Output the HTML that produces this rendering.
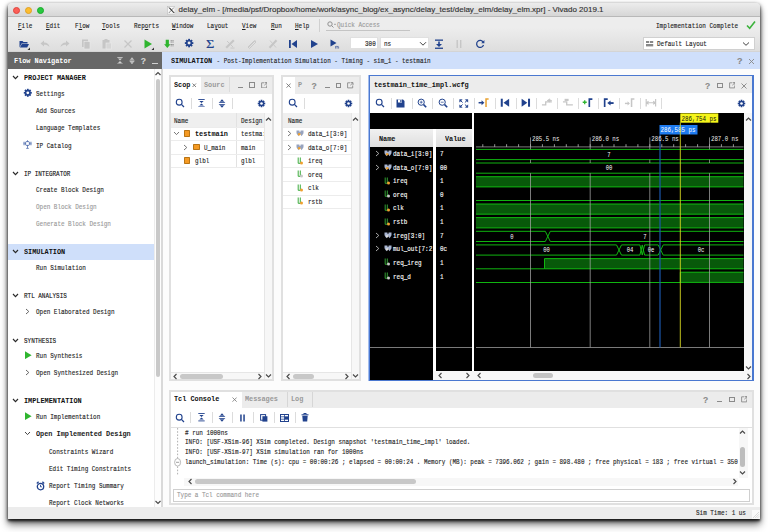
<!DOCTYPE html>
<html><head><meta charset="utf-8"><title>delay_elm - Vivado 2019.1</title><style>
html,body{margin:0;padding:0}
body{width:768px;height:532px;background:#fff;font-family:"Liberation Mono",monospace;font-size:8px;overflow:hidden;position:relative}
.t{-webkit-text-stroke:0.14px currentColor;position:absolute;display:inline-block;transform:scaleX(.743);transform-origin:0 50%;white-space:pre;line-height:10px;height:10px}
.r{position:absolute;box-sizing:border-box}
u{text-decoration:underline;text-underline-offset:1px}
</style></head><body>
<div class="r" style="left:8px;top:3px;width:752px;height:515.7px;background:#ececec;border-radius:4px 4px 0 0;box-shadow:0 2px 2.5px rgba(0,0,0,.7),0 4px 6px rgba(0,0,0,.5),0 7px 8px rgba(0,0,0,.22),0 1px 4px rgba(0,0,0,.35)"></div>
<div class="r" style="left:8px;top:3px;width:752px;height:14px;background:linear-gradient(#ececec,#d6d6d6);border-radius:4px 4px 0 0;border-bottom:1px solid #b8b8b8"></div>
<div class="r" style="left:13.2px;top:6.5px;width:7px;height:7px;background:#fc5f57;border-radius:50%;border:0.5px solid #e0443e"></div>
<div class="r" style="left:25.1px;top:6.5px;width:7px;height:7px;background:#fdbc2e;border-radius:50%;border:0.5px solid #dea123"></div>
<div class="r" style="left:37.0px;top:6.5px;width:7px;height:7px;background:#28c840;border-radius:50%;border:0.5px solid #1aab29"></div>
<span class="t" style="left:178.6px;top:5.40px;font-size:8.0px;color:#333;transform:scaleX(1);font-family:'Liberation Sans',sans-serif;">delay_elm - [/media/psf/Dropbox/home/work/async_blog/ex_async/delay_test/delay_elm/delay_elm.xpr] - Vivado 2019.1</span>
<svg class="r" style="left:166.5px;top:6px;" width="8.5" height="8.5" viewBox="0 0 8.5 8.5"><rect x="0.4" y="0.4" width="7.7" height="7.7" fill="#f8f8f8" stroke="#bbb" stroke-width="0.6"/><path d="M1.8 1.6 L6.8 7 M2.6 1.6 L7.4 7" stroke="#222" stroke-width="0.7"/><path d="M6.8 1.6 L1.8 7" stroke="#222" stroke-width="0.5"/></svg>
<div class="r" style="left:8px;top:17px;width:752px;height:35px;background:linear-gradient(#ededed 30%,#dedede 96%,#cfcfcf);"></div>
<span class="t" style="left:18.3px;top:21.10px;font-size:8px;color:#222;"><u>F</u>ile</span>
<span class="t" style="left:46px;top:21.10px;font-size:8px;color:#222;"><u>E</u>dit</span>
<span class="t" style="left:74.7px;top:21.10px;font-size:8px;color:#222;">F<u>l</u>ow</span>
<span class="t" style="left:102.3px;top:21.10px;font-size:8px;color:#222;"><u>T</u>ools</span>
<span class="t" style="left:134px;top:21.10px;font-size:8px;color:#222;">Rep<u>o</u>rts</span>
<span class="t" style="left:172.3px;top:21.10px;font-size:8px;color:#222;"><u>W</u>indow</span>
<span class="t" style="left:207.3px;top:21.10px;font-size:8px;color:#222;">La<u>y</u>out</span>
<span class="t" style="left:242.3px;top:21.10px;font-size:8px;color:#222;"><u>V</u>iew</span>
<span class="t" style="left:270.5px;top:21.10px;font-size:8px;color:#222;"><u>R</u>un</span>
<span class="t" style="left:295px;top:21.10px;font-size:8px;color:#222;"><u>H</u>elp</span>
<div class="r" style="left:319px;top:19px;width:1px;height:13px;background:#d0d0d0;"></div>
<span class="t" style="left:337.2px;top:19.60px;font-size:8px;color:#999;">Quick Access</span>
<svg class="r" style="left:326.5px;top:21px;" width="10" height="7" viewBox="0 0 10 7"><circle cx="3" cy="3" r="2.2" fill="none" stroke="#888" stroke-width="0.9"/><path d="M4.6 4.6 L6.5 6.5 M7.2 3.3 h1.6" stroke="#888" stroke-width="0.9"/></svg>
<div class="r" style="left:326px;top:30.3px;width:83.5px;height:1px;background:#c4c4c4;"></div>
<span class="t" style="left:656px;top:21.10px;font-size:8px;color:#222;">Implementation Complete</span>
<svg class="r" style="left:746px;top:20px;" width="10" height="10" viewBox="0 0 10 10"><path d="M1 5.5 L3.7 8.3 L9 1.5" fill="none" stroke="#3db33d" stroke-width="1.6"/></svg>
<svg class="r" style="left:18.0px;top:37.5px;" width="12" height="12" viewBox="0 0 12 12"><path d="M1.5 3 h3 l1 1 h4 v1.5 h-6 l-2 4 z" fill="#21428d"/><path d="M3.8 6 h7.2 l-1.8 3.6 h-7.3 z" fill="#21428d"/><path d="M9.5 12 l2.5 -2.5 v2.5 z" fill="#333"/></svg>
<svg class="r" style="left:39.0px;top:37.5px;" width="12" height="12" viewBox="0 0 12 12"><path d="M1.5 5.5 L5 2.5 V4.5 C8 4.5 10 6 10.5 9 C9 7.2 7.5 6.7 5 6.7 V8.5 Z" fill="#c6c6c6"/></svg>
<svg class="r" style="left:59.0px;top:37.5px;" width="12" height="12" viewBox="0 0 12 12"><path d="M10.5 5.5 L7 2.5 V4.5 C4 4.5 2 6 1.5 9 C3 7.2 4.5 6.7 7 6.7 V8.5 Z" fill="#c6c6c6"/></svg>
<svg class="r" style="left:80.0px;top:37.5px;" width="12" height="12" viewBox="0 0 12 12"><rect x="2" y="1.5" width="6" height="7.5" fill="#c6c6c6"/><rect x="4" y="3.5" width="6" height="7.5" fill="#c6c6c6" stroke="#ececec" stroke-width="0.6"/></svg>
<svg class="r" style="left:100.6px;top:37.5px;" width="12" height="12" viewBox="0 0 12 12"><rect x="1.5" y="2" width="7" height="8.5" fill="#c6c6c6"/><rect x="3.5" y="1" width="3" height="2" fill="#c6c6c6"/><rect x="5" y="5" width="5.5" height="6" fill="#d6d6d6" stroke="#ececec" stroke-width="0.6"/></svg>
<svg class="r" style="left:121.6px;top:37.5px;" width="12" height="12" viewBox="0 0 12 12"><path d="M2.5 2.5 L9.5 9.5 M9.5 2.5 L2.5 9.5" stroke="#c6c6c6" stroke-width="1.2"/></svg>
<svg class="r" style="left:142.0px;top:37.5px;" width="12" height="12" viewBox="0 0 12 12"><path d="M2.5 1.5 L10 6 L2.5 10.5 Z" fill="#2fb52f"/><path d="M9.5 12 l2.5 -2.5 v2.5 z" fill="#333"/></svg>
<svg class="r" style="left:162.5px;top:37.5px;" width="12" height="12" viewBox="0 0 12 12"><path d="M2.7 1.7 h3.2 v4.6 h1.6 l-3.2 3.7 l-3.2 -3.7 h1.6 z" fill="#2fb52f"/><path d="M8.2 2.2 v2.6 M10 2.2 v2.6 M8.2 6 v2.6 M10 6 v2.6" stroke="#777" stroke-width="1.1" stroke-dasharray="0.9 0.5"/></svg>
<svg class="r" style="left:184.2px;top:38.4px;" width="10.2" height="10.2" viewBox="0 0 12 12"><g transform="translate(6 6)"><g fill="#21428d"><rect x="-1.1" y="-5" width="2.2" height="10" transform="rotate(0)"/><rect x="-1.1" y="-5" width="2.2" height="10" transform="rotate(45)"/><rect x="-1.1" y="-5" width="2.2" height="10" transform="rotate(90)"/><rect x="-1.1" y="-5" width="2.2" height="10" transform="rotate(135)"/></g><circle r="3.7" fill="#21428d"/><circle r="1.75" fill="#ececec"/></g></svg>
<span class="t" style="left:206px;top:38.70px;font-size:12.5px;color:#21428d;transform:scaleX(1.15);font-family:'Liberation Serif',serif;">Σ</span>
<svg class="r" style="left:224.3px;top:37.5px;" width="12" height="12" viewBox="0 0 12 12"><path d="M2.2 9.8 L9.8 2.2" stroke="#c6c6c6" stroke-width="2.2"/><path d="M3 3 L9 9 M6.5 10 h4" stroke="#c6c6c6" stroke-width="0.9"/></svg>
<svg class="r" style="left:245.7px;top:37.5px;" width="12" height="12" viewBox="0 0 12 12"><path d="M2 9 L8.5 2.5 L10 4 L3.5 10.5 Z M4 7 L7.5 3.5" stroke="#c6c6c6" stroke-width="0.9" fill="none"/><path d="M2 10 L9.5 2.5" stroke="#c6c6c6" stroke-width="0.8"/></svg>
<svg class="r" style="left:266.5px;top:37.5px;" width="12" height="12" viewBox="0 0 12 12"><path d="M2.5 9.8 L9.5 2.2" stroke="#c6c6c6" stroke-width="2"/><path d="M3 2.5 L9 9.5" stroke="#c6c6c6" stroke-width="0.9"/></svg>
<svg class="r" style="left:287.3px;top:37.5px;" width="12" height="12" viewBox="0 0 12 12"><rect x="2" y="2" width="1.8" height="8" fill="#21428d"/><path d="M10 2 L4.5 6 L10 10 Z" fill="#21428d"/></svg>
<svg class="r" style="left:307.7px;top:37.5px;" width="12" height="12" viewBox="0 0 12 12"><path d="M3 2 L10 6 L3 10 Z" fill="#21428d"/></svg>
<svg class="r" style="left:329.0px;top:37.5px;" width="12" height="12" viewBox="0 0 12 12"><path d="M1.5 1.5 L7.5 5 L1.5 8.5 Z" fill="#21428d"/><path d="M6.6 10.6 v-2.4 M6.6 8.6 q1.2 -0.9 1.5 0.3 v1.7 M8.1 8.6 q1.2 -0.9 1.5 0.3 v1.7" stroke="#21428d" stroke-width="0.6" fill="none"/></svg>
<div class="r" style="left:349.5px;top:37px;width:28.5px;height:12px;background:#fff;border:1px solid #e0e0e0"></div>
<span class="t" style="left:365px;top:38.60px;font-size:8px;color:#222;">300</span>
<div class="r" style="left:380px;top:37px;width:49.2px;height:12px;background:#fff;border:1px solid #e0e0e0"></div>
<span class="t" style="left:384px;top:38.60px;font-size:8px;color:#222;">ns</span>
<svg class="r" style="left:418.5px;top:40.6px;" width="8" height="6" viewBox="0 0 8 6"><path d="M1 1.2 L4 4.2 L7 1.2" fill="none" stroke="#444" stroke-width="1"/></svg>
<svg class="r" style="left:432.5px;top:37.5px;" width="12" height="12" viewBox="0 0 12 12"><rect x="2" y="1.5" width="8" height="1.3" fill="#21428d"/><path d="M6 3.5 v4" stroke="#21428d" stroke-width="1.6"/><path d="M3 6 h6 l-3 3 z" fill="#21428d"/><rect x="2" y="9.6" width="8" height="1.3" fill="#21428d"/></svg>
<svg class="r" style="left:453.3px;top:37.5px;" width="12" height="12" viewBox="0 0 12 12"><rect x="3.5" y="2" width="1.4" height="8" fill="#c6c6c6"/><rect x="7" y="2" width="1.4" height="8" fill="#c6c6c6"/></svg>
<svg class="r" style="left:473.8px;top:37.5px;" width="12" height="12" viewBox="0 0 12 12"><path d="M9.2 4.2 A3.5 3.5 0 1 0 9.5 7" fill="none" stroke="#21428d" stroke-width="1.25"/><path d="M10.4 2 v3.2 h-3.2 z" fill="#21428d"/></svg>
<div class="r" style="left:642.5px;top:37px;width:112.5px;height:13px;background:#fff;border:1px solid #d0d0d0"></div>
<svg class="r" style="left:646px;top:40.5px;" width="8" height="7" viewBox="0 0 8 7"><rect x="0" y="0" width="3.2" height="2" fill="#888"/><rect x="4" y="0" width="3.2" height="2" fill="#888"/><rect x="0" y="3" width="7.2" height="2.4" fill="#888"/></svg>
<span class="t" style="left:657px;top:39.10px;font-size:8px;color:#222;">Default Layout</span>
<svg class="r" style="left:742px;top:41px;" width="8" height="6" viewBox="0 0 8 6"><path d="M1 1.5 L4 4.3 L7 1.5" fill="none" stroke="#444" stroke-width="1"/></svg>
<div class="r" style="left:8px;top:52px;width:154px;height:16.6px;background:#676767;"></div>
<span class="t" style="left:14px;top:55.90px;font-size:8px;color:#fff;font-weight:bold;-webkit-text-stroke:0;transform:scaleX(0.858);">Flow Navigator</span>
<svg class="r" style="left:116.5px;top:57px;" width="6" height="7.4" viewBox="0 0 6 7.4"><path d="M0.3 0.5 h5.4 M0.3 6.9 h5.4" stroke="#d0d0d0" stroke-width="0.8"/><path d="M3 3.5 L5 1.5 H1 Z M3 3.9 L5 5.9 H1 Z" fill="#d0d0d0"/></svg>
<svg class="r" style="left:128.6px;top:57px;" width="6" height="7.4" viewBox="0 0 6 7.4"><path d="M3 0.2 L5.7 3.4 H0.3 Z M3 7.2 L5.7 4 H0.3 Z" fill="#d0d0d0"/><path d="M0 2.3 h6 M0 5.1 h6" stroke="#676767" stroke-width="0.4"/></svg>
<span class="t" style="left:140.8px;top:55.90px;font-size:8.5px;color:#d4d4d4;transform:scaleX(1);font-family:'Liberation Sans',sans-serif;font-weight:bold;">?</span>
<div class="r" style="left:152px;top:62.6px;width:6.3px;height:1.2px;background:#d0d0d0;"></div>
<div class="r" style="left:8px;top:68.7px;width:146px;height:438.5px;background:#fff;"></div>
<div class="r" style="left:153.5px;top:68.7px;width:7.5px;height:438.5px;background:#fdfdfd;border-left:1px solid #ececec"></div>
<div class="r" style="left:155.5px;top:79px;width:4.5px;height:297.5px;background:#c9c9c9;border-radius:2.5px"></div>
<svg class="r" style="left:154px;top:70px;" width="8" height="7" viewBox="0 0 8 7"><path d="M1.5 5 L4 2.5 L6.5 5" fill="none" stroke="#4a4a4a" stroke-width="1.15"/></svg>
<svg class="r" style="left:154px;top:499px;" width="8" height="7" viewBox="0 0 8 7"><path d="M1.5 2 L4 4.5 L6.5 2" fill="none" stroke="#4a4a4a" stroke-width="1.15"/></svg>
<div class="r" style="left:8px;top:244px;width:146px;height:15.7px;background:#cfdffa;"></div>
<svg class="r" style="left:11.8px;top:75.1px;" width="7" height="5" viewBox="0 0 7 5"><path d="M1 1 L3.5 3.6 L6 1" fill="none" stroke="#2a2a2a" stroke-width="1.15"/></svg>
<span class="t" style="left:24px;top:73.20px;font-size:8px;color:#111;font-weight:bold;-webkit-text-stroke:0;transform:scaleX(0.858);">PROJECT MANAGER</span>
<span class="t" style="left:36.2px;top:89.00px;font-size:8px;color:#222;">Settings</span>
<svg class="r" style="left:23.2px;top:88.4px;" width="9.6" height="9.6" viewBox="0 0 12 12"><g transform="translate(6 6)"><g fill="#21428d"><rect x="-1.1" y="-5" width="2.2" height="10" transform="rotate(0)"/><rect x="-1.1" y="-5" width="2.2" height="10" transform="rotate(45)"/><rect x="-1.1" y="-5" width="2.2" height="10" transform="rotate(90)"/><rect x="-1.1" y="-5" width="2.2" height="10" transform="rotate(135)"/></g><circle r="3.7" fill="#21428d"/><circle r="1.75" fill="#fff"/></g></svg>
<span class="t" style="left:36.2px;top:105.90px;font-size:8px;color:#222;">Add Sources</span>
<span class="t" style="left:36.2px;top:123.10px;font-size:8px;color:#222;">Language Templates</span>
<span class="t" style="left:36.2px;top:140.60px;font-size:8px;color:#222;">IP Catalog</span>
<svg class="r" style="left:23.2px;top:139.8px;" width="9" height="10" viewBox="0 0 9 10"><rect x="2.6" y="1.6" width="3.8" height="3.8" rx="1" fill="none" stroke="#3e5fa6" stroke-width="0.9"/><path d="M0.3 2.3 h1.6 M0.3 3.5 h1.6 M0.3 4.7 h1.6 M7.1 2.3 h1.6 M7.1 3.5 h1.6 M7.1 4.7 h1.6 M4.5 0.2 v1 M4.5 5.6 v2.6 M3.2 8.4 h2.6" stroke="#3e5fa6" stroke-width="0.7" fill="none"/></svg>
<svg class="r" style="left:11.8px;top:170.9px;" width="7" height="5" viewBox="0 0 7 5"><path d="M1 1 L3.5 3.6 L6 1" fill="none" stroke="#2a2a2a" stroke-width="1.15"/></svg>
<span class="t" style="left:24px;top:169.00px;font-size:8px;color:#111;">IP INTEGRATOR</span>
<span class="t" style="left:36.2px;top:184.60px;font-size:8px;color:#222;">Create Block Design</span>
<span class="t" style="left:36.2px;top:201.90px;font-size:8px;color:#999;">Open Block Design</span>
<span class="t" style="left:36.2px;top:219.00px;font-size:8px;color:#999;">Generate Block Design</span>
<svg class="r" style="left:11.8px;top:249.3px;" width="7" height="5" viewBox="0 0 7 5"><path d="M1 1 L3.5 3.6 L6 1" fill="none" stroke="#2a2a2a" stroke-width="1.15"/></svg>
<span class="t" style="left:24px;top:247.40px;font-size:8px;color:#111;font-weight:bold;-webkit-text-stroke:0;transform:scaleX(0.858);">SIMULATION</span>
<span class="t" style="left:36.2px;top:263.00px;font-size:8px;color:#222;">Run Simulation</span>
<svg class="r" style="left:11.8px;top:293.3px;" width="7" height="5" viewBox="0 0 7 5"><path d="M1 1 L3.5 3.6 L6 1" fill="none" stroke="#2a2a2a" stroke-width="1.15"/></svg>
<span class="t" style="left:24px;top:291.40px;font-size:8px;color:#111;">RTL ANALYSIS</span>
<span class="t" style="left:36.2px;top:306.90px;font-size:8px;color:#222;">Open Elaborated Design</span>
<svg class="r" style="left:25.0px;top:307.8px;" width="5" height="7" viewBox="0 0 5 7"><path d="M1 1 L3.8 3.5 L1 6" fill="none" stroke="#555" stroke-width="0.9"/></svg>
<svg class="r" style="left:11.8px;top:337.5px;" width="7" height="5" viewBox="0 0 7 5"><path d="M1 1 L3.5 3.6 L6 1" fill="none" stroke="#2a2a2a" stroke-width="1.15"/></svg>
<span class="t" style="left:24px;top:335.60px;font-size:8px;color:#111;">SYNTHESIS</span>
<span class="t" style="left:36.2px;top:350.90px;font-size:8px;color:#222;">Run Synthesis</span>
<svg class="r" style="left:23.5px;top:351.1px;" width="8" height="8.4" viewBox="0 0 8 8.4"><path d="M1 0.3 L7.6 4.2 L1 8.1 Z" fill="#2fb52f"/></svg>
<span class="t" style="left:36.2px;top:368.20px;font-size:8px;color:#222;">Open Synthesized Design</span>
<svg class="r" style="left:25.0px;top:369.1px;" width="5" height="7" viewBox="0 0 5 7"><path d="M1 1 L3.8 3.5 L1 6" fill="none" stroke="#555" stroke-width="0.9"/></svg>
<svg class="r" style="left:11.8px;top:398.3px;" width="7" height="5" viewBox="0 0 7 5"><path d="M1 1 L3.5 3.6 L6 1" fill="none" stroke="#2a2a2a" stroke-width="1.15"/></svg>
<span class="t" style="left:24px;top:396.40px;font-size:8px;color:#111;font-weight:bold;-webkit-text-stroke:0;transform:scaleX(0.858);">IMPLEMENTATION</span>
<span class="t" style="left:36.2px;top:412.20px;font-size:8px;color:#222;">Run Implementation</span>
<svg class="r" style="left:23.5px;top:412.40000000000003px;" width="8" height="8.4" viewBox="0 0 8 8.4"><path d="M1 0.3 L7.6 4.2 L1 8.1 Z" fill="#2fb52f"/></svg>
<span class="t" style="left:36.2px;top:429.10px;font-size:8px;color:#222;font-weight:bold;-webkit-text-stroke:0;transform:scaleX(0.858);">Open Implemented Design</span>
<svg class="r" style="left:24.0px;top:431.0px;" width="7" height="5" viewBox="0 0 7 5"><path d="M1 1 L3.5 3.6 L6 1" fill="none" stroke="#444" stroke-width="1"/></svg>
<span class="t" style="left:48.5px;top:446.60px;font-size:8px;color:#222;">Constraints Wizard</span>
<span class="t" style="left:48.5px;top:463.80px;font-size:8px;color:#222;">Edit Timing Constraints</span>
<span class="t" style="left:48.5px;top:481.10px;font-size:8px;color:#222;">Report Timing Summary</span>
<svg class="r" style="left:36px;top:480.5px;" width="9" height="10" viewBox="0 0 9 10"><circle cx="4.5" cy="5.6" r="3.2" fill="none" stroke="#21428d" stroke-width="1.3"/><path d="M4.5 3.8 v2 h1.4" stroke="#21428d" stroke-width="0.9" fill="none"/><path d="M0.8 2.4 l1.8 -1.6 M8.2 2.4 l-1.8 -1.6" stroke="#21428d" stroke-width="1.3" fill="none"/></svg>
<span class="t" style="left:48.5px;top:498.30px;font-size:8px;color:#222;">Report Clock Networks</span>
<div class="r" style="left:162px;top:52px;width:598px;height:16.7px;background:#cfdffb;"></div>
<span class="t" style="left:170.5px;top:55.90px;font-size:8px;color:#111;font-weight:bold;-webkit-text-stroke:0;transform:scaleX(0.858);">SIMULATION</span>
<span class="t" style="left:213.4px;top:55.90px;font-size:8px;color:#222;"> - Post-Implementation Simulation - Timing - sim_1 - testmain</span>
<span class="t" style="left:737px;top:56.10px;font-size:9px;color:#888;transform:scaleX(1);font-family:'Liberation Sans',sans-serif;font-weight:bold;">?</span>
<svg class="r" style="left:748px;top:57.5px;" width="7" height="7" viewBox="0 0 7 7"><path d="M1 1 L6 6 M6 1 L1 6" stroke="#888" stroke-width="0.9"/></svg>
<div class="r" style="left:162px;top:68.7px;width:598px;height:438.5px;background:#fcfcfc;"></div>
<div class="r" style="left:161px;top:68.7px;width:2px;height:438.5px;background:#d9d9d9;"></div>
<div class="r" style="left:168.5px;top:75px;width:105px;height:306px;background:#fff;border:2px solid #e0e0e0"></div>
<div class="r" style="left:170.5px;top:77px;width:101px;height:16.5px;background:#ececec;"></div>
<div class="r" style="left:170.5px;top:77px;width:30.5px;height:16.5px;background:#fff;"></div>
<span class="t" style="left:174px;top:79.70px;font-size:8px;color:#111;font-weight:bold;-webkit-text-stroke:0;transform:scaleX(0.858);">Scop</span>
<svg class="r" style="left:192.25px;top:83.05px;" width="4.5" height="4.5" viewBox="0 0 4.5 4.5"><path d="M0.5 0.5 L4.0 4.0 M4.0 0.5 L0.5 4.0" stroke="#666" stroke-width="0.8"/></svg>
<span class="t" style="left:204px;top:79.70px;font-size:8px;color:#999;font-weight:bold;-webkit-text-stroke:0;transform:scaleX(0.858);">Sourc</span>
<div class="r" style="left:228.5px;top:77px;width:1px;height:15px;background:#dcdcdc;"></div>
<div class="r" style="left:237.5px;top:86.5px;width:5px;height:1px;background:#8a8a8a;"></div>
<div class="r" style="left:249.0px;top:82.2px;width:5.5px;height:5.5px;background:transparent;border:1px solid #8a8a8a"></div>
<svg class="r" style="left:260.5px;top:81.7px;" width="6.5" height="6.5" viewBox="0 0 6.5 6.5"><path d="M3 0.8 H0.6 V5.9 H5.7 V3.5" fill="none" stroke="#8a8a8a" stroke-width="0.9"/><path d="M3.6 0.6 H6 V3 M6 0.6 L3.4 3.2" fill="none" stroke="#8a8a8a" stroke-width="0.9"/></svg>
<svg class="r" style="left:175px;top:98px;" width="10" height="10" viewBox="0 0 10 10"><circle cx="4.2" cy="4.2" r="2.9" fill="none" stroke="#21428d" stroke-width="1.1"/><path d="M6.4 6.4 L9 9" stroke="#21428d" stroke-width="1.3"/></svg>
<div class="r" style="left:190.5px;top:97.5px;width:1px;height:11px;background:#dcdcdc;"></div>
<svg class="r" style="left:197.5px;top:98.8px;" width="7" height="8.4" viewBox="0 0 7 8.4"><path d="M0.3 0.5 h6.4 M0.3 7.9 h6.4" stroke="#21428d" stroke-width="0.9"/><path d="M3.5 4 L5.7 1.9 H1.3 Z M3.5 4.4 L5.7 6.5 H1.3 Z" fill="#21428d"/></svg>
<div class="r" style="left:211.5px;top:97.5px;width:1px;height:11px;background:#dcdcdc;"></div>
<svg class="r" style="left:217.5px;top:98.5px;" width="8" height="9" viewBox="0 0 8 9"><path d="M4 0.3 L7.4 4.1 H0.6 Z M4 8.7 L7.4 4.9 H0.6 Z" fill="#21428d"/><path d="M0 2.9 h8 M0 6.1 h8" stroke="#fff" stroke-width="0.5"/></svg>
<div class="r" style="left:232px;top:97.5px;width:1px;height:11px;background:#dcdcdc;"></div>
<svg class="r" style="left:257.0px;top:98.5px;" width="9" height="9" viewBox="0 0 12 12"><g transform="translate(6 6)"><g fill="#21428d"><rect x="-1.1" y="-5" width="2.2" height="10" transform="rotate(0)"/><rect x="-1.1" y="-5" width="2.2" height="10" transform="rotate(45)"/><rect x="-1.1" y="-5" width="2.2" height="10" transform="rotate(90)"/><rect x="-1.1" y="-5" width="2.2" height="10" transform="rotate(135)"/></g><circle r="3.7" fill="#21428d"/><circle r="1.75" fill="#fff"/></g></svg>
<div class="r" style="left:170.5px;top:113px;width:93px;height:13.5px;background:#efefef;"></div>
<div class="r" style="left:235.5px;top:113px;width:1px;height:54.5px;background:#e2e2e2;"></div>
<span class="t" style="left:174px;top:115.60px;font-size:8px;color:#222;">Name</span>
<span class="t" style="left:240.5px;top:115.60px;font-size:8px;color:#222;">Design</span>
<div class="r" style="left:170.5px;top:126.5px;width:93px;height:1px;background:#ececec;"></div>
<div class="r" style="left:170.5px;top:140.2px;width:93px;height:1px;background:#ececec;"></div>
<div class="r" style="left:170.5px;top:153.8px;width:93px;height:1px;background:#ececec;"></div>
<div class="r" style="left:170.5px;top:167.4px;width:93px;height:1px;background:#ececec;"></div>
<svg class="r" style="left:172.5px;top:131.1px;" width="7" height="5" viewBox="0 0 7 5"><path d="M1 1 L3.5 3.6 L6 1" fill="none" stroke="#666" stroke-width="0.9"/></svg>
<div class="r" style="left:183.8px;top:130.0px;width:6.6px;height:6.9px;background:#f59a23;border:0.8px solid #b87414;border-radius:0.8px"></div>
<span class="t" style="left:194.5px;top:129.00px;font-size:8px;color:#111;font-weight:bold;-webkit-text-stroke:0;transform:scaleX(0.858);">testmain</span>
<span class="t" style="left:240.5px;top:129.00px;font-size:8px;color:#222;">testma:</span>
<svg class="r" style="left:183.0px;top:143.5px;" width="5" height="7" viewBox="0 0 5 7"><path d="M1 1 L3.8 3.5 L1 6" fill="none" stroke="#666" stroke-width="0.9"/></svg>
<div class="r" style="left:193.3px;top:143.6px;width:6.6px;height:6.9px;background:#f59a23;border:0.8px solid #b87414;border-radius:0.8px"></div>
<span class="t" style="left:204px;top:142.60px;font-size:8px;color:#222;">U_main</span>
<span class="t" style="left:240.5px;top:142.60px;font-size:8px;color:#222;">main</span>
<div class="r" style="left:183.8px;top:157.1px;width:6.6px;height:6.9px;background:#f59a23;border:0.8px solid #b87414;border-radius:0.8px"></div>
<span class="t" style="left:194.5px;top:156.10px;font-size:8px;color:#222;">glbl</span>
<span class="t" style="left:240.5px;top:156.10px;font-size:8px;color:#222;">glbl</span>
<div class="r" style="left:263.5px;top:113px;width:8px;height:266px;background:#f7f7f7;border-left:1px solid #e6e6e6"></div>
<svg class="r" style="left:264.5px;top:116px;" width="7" height="6" viewBox="0 0 7 6"><path d="M1 4.5 L3.5 2 L6 4.5" fill="none" stroke="#4a4a4a" stroke-width="1.15"/></svg>
<svg class="r" style="left:264.5px;top:373px;" width="7" height="6" viewBox="0 0 7 6"><path d="M1 1.5 L3.5 4 L6 1.5" fill="none" stroke="#4a4a4a" stroke-width="1.15"/></svg>
<div class="r" style="left:170.5px;top:372px;width:93px;height:7px;background:#f7f7f7;border-top:1px solid #e6e6e6"></div>
<svg class="r" style="left:171.5px;top:372.5px;" width="6" height="7" viewBox="0 0 6 7"><path d="M4.5 1 L2 3.5 L4.5 6" fill="none" stroke="#4a4a4a" stroke-width="1.15"/></svg>
<svg class="r" style="left:256.5px;top:372.5px;" width="6" height="7" viewBox="0 0 6 7"><path d="M1.5 1 L4 3.5 L1.5 6" fill="none" stroke="#4a4a4a" stroke-width="1.15"/></svg>
<div class="r" style="left:180px;top:374px;width:42.5px;height:4.5px;background:#c8c8c8;border-radius:2.5px"></div>
<div class="r" style="left:281px;top:75px;width:80px;height:306px;background:#fff;border:2px solid #e0e0e0"></div>
<div class="r" style="left:283px;top:77px;width:76px;height:16.5px;background:#ececec;"></div>
<div class="r" style="left:283px;top:77px;width:12px;height:16.5px;background:#fff;"></div>
<svg class="r" style="left:285.9px;top:82.9px;" width="5.2" height="5.2" viewBox="0 0 5.2 5.2"><path d="M0.5 0.5 L4.7 4.7 M4.7 0.5 L0.5 4.7" stroke="#666" stroke-width="0.8"/></svg>
<span class="t" style="left:298px;top:79.60px;font-size:8px;color:#999;font-weight:bold;-webkit-text-stroke:0;transform:scaleX(0.858);">P</span>
<span class="t" style="left:311.5px;top:80.60px;font-size:8.5px;color:#8a8a8a;transform:scaleX(1);font-family:'Liberation Sans',sans-serif;font-weight:bold;">?</span>
<div class="r" style="left:324.5px;top:87px;width:5px;height:1px;background:#8a8a8a;"></div>
<div class="r" style="left:335.5px;top:82.5px;width:5.5px;height:5.5px;background:transparent;border:1px solid #8a8a8a"></div>
<svg class="r" style="left:347px;top:82px;" width="6.5" height="6.5" viewBox="0 0 6.5 6.5"><path d="M3 0.8 H0.6 V5.9 H5.7 V3.5" fill="none" stroke="#8a8a8a" stroke-width="0.9"/><path d="M3.6 0.6 H6 V3 M6 0.6 L3.4 3.2" fill="none" stroke="#8a8a8a" stroke-width="0.9"/></svg>
<svg class="r" style="left:288px;top:98px;" width="10" height="10" viewBox="0 0 10 10"><circle cx="4.2" cy="4.2" r="2.9" fill="none" stroke="#21428d" stroke-width="1.1"/><path d="M6.4 6.4 L9 9" stroke="#21428d" stroke-width="1.3"/></svg>
<div class="r" style="left:303.5px;top:97.5px;width:1px;height:11px;background:#dcdcdc;"></div>
<svg class="r" style="left:344.0px;top:98.5px;" width="9" height="9" viewBox="0 0 12 12"><g transform="translate(6 6)"><g fill="#21428d"><rect x="-1.1" y="-5" width="2.2" height="10" transform="rotate(0)"/><rect x="-1.1" y="-5" width="2.2" height="10" transform="rotate(45)"/><rect x="-1.1" y="-5" width="2.2" height="10" transform="rotate(90)"/><rect x="-1.1" y="-5" width="2.2" height="10" transform="rotate(135)"/></g><circle r="3.7" fill="#21428d"/><circle r="1.75" fill="#fff"/></g></svg>
<div class="r" style="left:283px;top:113px;width:67.5px;height:13.5px;background:#efefef;"></div>
<span class="t" style="left:287.5px;top:115.60px;font-size:8px;color:#222;">Name</span>
<div class="r" style="left:283px;top:126.5px;width:67.5px;height:1px;background:#ececec;"></div>
<div class="r" style="left:283px;top:140.2px;width:67.5px;height:1px;background:#ececec;"></div>
<div class="r" style="left:283px;top:153.8px;width:67.5px;height:1px;background:#ececec;"></div>
<div class="r" style="left:283px;top:167.4px;width:67.5px;height:1px;background:#ececec;"></div>
<div class="r" style="left:283px;top:181px;width:67.5px;height:1px;background:#ececec;"></div>
<div class="r" style="left:283px;top:194.6px;width:67.5px;height:1px;background:#ececec;"></div>
<div class="r" style="left:283px;top:208.2px;width:67.5px;height:1px;background:#ececec;"></div>
<svg class="r" style="left:286.5px;top:129.9px;" width="5" height="7" viewBox="0 0 5 7"><path d="M1 1 L3.8 3.5 L1 6" fill="none" stroke="#666" stroke-width="0.9"/></svg>
<svg class="r" style="left:296px;top:129.9px;" width="8" height="7" viewBox="0 0 8 7"><path d="M0.5 0.6 H3.4 V1.8 H4.6 V0.6 H7.5 V3.2 L5.6 6.3 L4 3.6 L2.4 6.3 L0.5 3.2 Z" fill="#97a3be"/><circle cx="3.2" cy="4.2" r="1.25" fill="#eea030"/></svg>
<span class="t" style="left:307.5px;top:129.00px;font-size:8px;color:#222;">data_i[3:0]</span>
<svg class="r" style="left:286.5px;top:143.5px;" width="5" height="7" viewBox="0 0 5 7"><path d="M1 1 L3.8 3.5 L1 6" fill="none" stroke="#666" stroke-width="0.9"/></svg>
<svg class="r" style="left:296px;top:143.5px;" width="8" height="7" viewBox="0 0 8 7"><path d="M0.5 0.6 H3.4 V1.8 H4.6 V0.6 H7.5 V3.2 L5.6 6.3 L4 3.6 L2.4 6.3 L0.5 3.2 Z" fill="#97a3be"/><circle cx="3.2" cy="4.2" r="1.25" fill="#eea030"/></svg>
<span class="t" style="left:307.5px;top:142.60px;font-size:8px;color:#222;">data_o[7:0]</span>
<svg class="r" style="left:297.0px;top:156.6px;" width="7" height="8" viewBox="0 0 7 8"><path d="M1.2 0.5 V6.3 H3.3 V0.5" fill="none" stroke="#35a835" stroke-width="0.95"/><circle cx="4.5" cy="6" r="1.5" fill="#f0a030"/></svg>
<span class="t" style="left:307.5px;top:156.20px;font-size:8px;color:#222;">ireq</span>
<svg class="r" style="left:297.0px;top:170.2px;" width="7" height="8" viewBox="0 0 7 8"><path d="M1.2 0.5 V6.3 H3.3 V0.5" fill="none" stroke="#35a835" stroke-width="0.95"/><circle cx="4.5" cy="6" r="1.5" fill="#c8c8c8"/></svg>
<span class="t" style="left:307.5px;top:169.80px;font-size:8px;color:#222;">oreq</span>
<svg class="r" style="left:297.0px;top:183.8px;" width="7" height="8" viewBox="0 0 7 8"><path d="M1.2 0.5 V6.3 H3.3 V0.5" fill="none" stroke="#35a835" stroke-width="0.95"/><circle cx="4.5" cy="6" r="1.5" fill="#f0a030"/></svg>
<span class="t" style="left:307.5px;top:183.40px;font-size:8px;color:#222;">clk</span>
<svg class="r" style="left:297.0px;top:197.4px;" width="7" height="8" viewBox="0 0 7 8"><path d="M1.2 0.5 V6.3 H3.3 V0.5" fill="none" stroke="#35a835" stroke-width="0.95"/><circle cx="4.5" cy="6" r="1.5" fill="#f0a030"/></svg>
<span class="t" style="left:307.5px;top:197.00px;font-size:8px;color:#222;">rstb</span>
<div class="r" style="left:350.5px;top:113px;width:8.5px;height:266px;background:#f7f7f7;border-left:1px solid #e6e6e6"></div>
<svg class="r" style="left:351.5px;top:116px;" width="7" height="6" viewBox="0 0 7 6"><path d="M1 4.5 L3.5 2 L6 4.5" fill="none" stroke="#4a4a4a" stroke-width="1.15"/></svg>
<svg class="r" style="left:351.5px;top:373px;" width="7" height="6" viewBox="0 0 7 6"><path d="M1 1.5 L3.5 4 L6 1.5" fill="none" stroke="#4a4a4a" stroke-width="1.15"/></svg>
<div class="r" style="left:283px;top:372px;width:67.5px;height:7px;background:#f7f7f7;border-top:1px solid #e6e6e6"></div>
<svg class="r" style="left:284.5px;top:372.5px;" width="6" height="7" viewBox="0 0 6 7"><path d="M4.5 1 L2 3.5 L4.5 6" fill="none" stroke="#4a4a4a" stroke-width="1.15"/></svg>
<svg class="r" style="left:343.5px;top:372.5px;" width="6" height="7" viewBox="0 0 6 7"><path d="M1.5 1 L4 3.5 L1.5 6" fill="none" stroke="#4a4a4a" stroke-width="1.15"/></svg>
<div class="r" style="left:293px;top:374px;width:20.5px;height:4.5px;background:#c8c8c8;border-radius:2.5px"></div>
<div class="r" style="left:368px;top:75px;width:1px;height:306px;background:#a3bdee;"></div>
<div class="r" style="left:369px;top:75px;width:385px;height:306px;background:#fff;border:1px solid #4a78d0;border-right-width:2px"></div>
<div class="r" style="left:370px;top:76px;width:382px;height:17px;background:#ececec;"></div>
<span class="t" style="left:374px;top:80.20px;font-size:8px;color:#111;font-weight:bold;-webkit-text-stroke:0;transform:scaleX(0.858);">testmain_time_impl.wcfg</span>
<span class="t" style="left:705.0px;top:80.60px;font-size:8.5px;color:#8a8a8a;transform:scaleX(1);font-family:'Liberation Sans',sans-serif;font-weight:bold;">?</span>
<div class="r" style="left:717.0px;top:82.5px;width:5.5px;height:5.5px;background:transparent;border:1px solid #8a8a8a"></div>
<svg class="r" style="left:728.5px;top:82px;" width="6.5" height="6.5" viewBox="0 0 6.5 6.5"><path d="M3 0.8 H0.6 V5.9 H5.7 V3.5" fill="none" stroke="#8a8a8a" stroke-width="0.9"/><path d="M3.6 0.6 H6 V3 M6 0.6 L3.4 3.2" fill="none" stroke="#8a8a8a" stroke-width="0.9"/></svg>
<svg class="r" style="left:740.5px;top:82.5px;" width="6" height="6" viewBox="0 0 6 6"><path d="M0.5 0.5 L5.5 5.5 M5.5 0.5 L0.5 5.5" stroke="#777" stroke-width="0.8"/></svg>
<svg class="r" style="left:375px;top:98px;" width="10" height="10" viewBox="0 0 10 10"><circle cx="4.2" cy="4.2" r="2.9" fill="none" stroke="#21428d" stroke-width="1.1"/><path d="M6.4 6.4 L9 9" stroke="#21428d" stroke-width="1.3"/></svg>
<div class="r" style="left:390.5px;top:97.5px;width:1px;height:11px;background:#dcdcdc;"></div>
<svg class="r" style="left:396px;top:98.5px;" width="9" height="9" viewBox="0 0 9 9"><path d="M0.5 0.5 h6.5 l1.5 1.5 v6.5 h-8 z" fill="#21428d"/><rect x="2" y="0.5" width="4" height="3" fill="#fff"/><rect x="4.3" y="1" width="1.2" height="2" fill="#21428d"/></svg>
<div class="r" style="left:411.5px;top:97.5px;width:1px;height:11px;background:#dcdcdc;"></div>
<svg class="r" style="left:417px;top:98px;" width="10" height="10" viewBox="0 0 10 10"><circle cx="4.2" cy="4.2" r="3.1" fill="none" stroke="#21428d" stroke-width="1"/><path d="M6.6 6.6 L9.2 9.2" stroke="#21428d" stroke-width="1.6"/><path d="M2.7 4.2 h3" stroke="#21428d" stroke-width="0.7"/><path d="M4.2 2.7 v3" stroke="#21428d" stroke-width="0.7"/></svg>
<div class="r" style="left:432px;top:97.5px;width:1px;height:11px;background:#dcdcdc;"></div>
<svg class="r" style="left:437.5px;top:98px;" width="10" height="10" viewBox="0 0 10 10"><circle cx="4.2" cy="4.2" r="3.1" fill="none" stroke="#21428d" stroke-width="1"/><path d="M6.6 6.6 L9.2 9.2" stroke="#21428d" stroke-width="1.6"/><path d="M2.7 4.2 h3" stroke="#21428d" stroke-width="0.7"/></svg>
<div class="r" style="left:453px;top:97.5px;width:1px;height:11px;background:#dcdcdc;"></div>
<svg class="r" style="left:459px;top:98.5px;" width="9.5" height="9" viewBox="0 0 9.5 9"><g fill="#21428d" stroke="#21428d" stroke-width="1"><path d="M0.6 0.6 h2.6 l-2.6 2.6 z M8.9 0.6 v2.6 l-2.6 -2.6 z M0.6 8.4 v-2.6 l2.6 2.6 z M8.9 8.4 h-2.6 l2.6 -2.6 z" stroke-width="0.4"/><path d="M1.4 1.4 L3.6 3.5 M8.1 1.4 L5.9 3.5 M1.4 7.6 L3.6 5.5 M8.1 7.6 L5.9 5.5" fill="none"/></g></svg>
<div class="r" style="left:474px;top:97.5px;width:1px;height:11px;background:#dcdcdc;"></div>
<svg class="r" style="left:478.40px;top:98.28px" width="11.80" height="9.44" viewBox="0 0 10 8"><path d="M0.5 4 h3.6" stroke="#21428d" stroke-width="1.3"/><path d="M3 1.9 L5.4 4 L3 6.1 Z" fill="#21428d"/><path d="M9 0.9 H6.8 V7.6" fill="none" stroke="#e9a233" stroke-width="1.3"/></svg>
<div class="r" style="left:494.5px;top:97.5px;width:1px;height:11px;background:#dcdcdc;"></div>
<svg class="r" style="left:498.90px;top:98.28px" width="11.80" height="9.44" viewBox="0 0 10 8"><rect x="1.5" y="0.6" width="1.7" height="6.8" fill="#21428d"/><path d="M8.6 0.6 L3.8 4 L8.6 7.4 Z" fill="#21428d"/></svg>
<div class="r" style="left:515.5px;top:97.5px;width:1px;height:11px;background:#dcdcdc;"></div>
<svg class="r" style="left:520.10px;top:98.28px" width="11.80" height="9.44" viewBox="0 0 10 8"><rect x="6.8" y="0.6" width="1.7" height="6.8" fill="#21428d"/><path d="M1.4 0.6 L6.2 4 L1.4 7.4 Z" fill="#21428d"/></svg>
<div class="r" style="left:536px;top:97.5px;width:1px;height:11px;background:#dcdcdc;"></div>
<svg class="r" style="left:540.60px;top:98.28px" width="11.80" height="9.44" viewBox="0 0 10 8"><path d="M0.8 5.8 h3.2 v-2.6 h5.2" fill="none" stroke="#c6c6c6" stroke-width="1.1"/><path d="M7.5 0.8 L5.3 2.2 L7.5 3.4 Z M7 2.1 h2.2" fill="#c6c6c6" stroke="#c6c6c6" stroke-width="0.8"/></svg>
<div class="r" style="left:556.5px;top:97.5px;width:1px;height:11px;background:#dcdcdc;"></div>
<svg class="r" style="left:561.60px;top:98.28px" width="11.80" height="9.44" viewBox="0 0 10 8"><path d="M0.8 3.2 h3.2 v2.6 h5.2" fill="none" stroke="#c6c6c6" stroke-width="1.1"/><path d="M2.2 0.7 h3.4 v1.8 h-3.4 z" fill="#c6c6c6"/></svg>
<div class="r" style="left:577.5px;top:97.5px;width:1px;height:11px;background:#dcdcdc;"></div>
<svg class="r" style="left:582.40px;top:98.28px" width="11.80" height="9.44" viewBox="0 0 10 8"><path d="M0.6 3.6 h3.4 M2.3 1.9 v3.4" stroke="#2fb52f" stroke-width="1.1"/><path d="M8.8 0.9 H6.2 V7.6" fill="none" stroke="#21428d" stroke-width="1.4"/></svg>
<div class="r" style="left:598px;top:97.5px;width:1px;height:11px;background:#dcdcdc;"></div>
<svg class="r" style="left:603.10px;top:98.28px" width="11.80" height="9.44" viewBox="0 0 10 8"><path d="M4 0.9 H1.4 V7.6" fill="none" stroke="#21428d" stroke-width="1.4"/><path d="M9 4.3 h-3.5" stroke="#21428d" stroke-width="1.6"/><path d="M6.4 2.2 L3.6 4.3 L6.4 6.4 Z" fill="#21428d"/></svg>
<div class="r" style="left:619px;top:97.5px;width:1px;height:11px;background:#dcdcdc;"></div>
<svg class="r" style="left:624.10px;top:98.28px" width="11.80" height="9.44" viewBox="0 0 10 8"><path d="M0.8 4.6 h3" stroke="#c6c6c6" stroke-width="1.2"/><path d="M3 2.8 L5 4.6 L3 6.4 Z" fill="#c6c6c6"/><path d="M8.8 0.9 H6.4 V7.6" fill="none" stroke="#c6c6c6" stroke-width="1.3"/></svg>
<div class="r" style="left:640px;top:97.5px;width:1px;height:11px;background:#dcdcdc;"></div>
<svg class="r" style="left:644.80px;top:98.28px" width="11.80" height="9.44" viewBox="0 0 10 8"><path d="M1 0.8 V7.2 M9 0.8 V7.2 M1.5 4 H8.5 M3 2.6 L1.5 4 L3 5.4 M7 2.6 L8.5 4 L7 5.4" fill="none" stroke="#c6c6c6" stroke-width="1"/></svg>
<div class="r" style="left:661px;top:97.5px;width:1px;height:11px;background:#dcdcdc;"></div>
<svg class="r" style="left:737.0px;top:98.5px;" width="9" height="9" viewBox="0 0 12 12"><g transform="translate(6 6)"><g fill="#21428d"><rect x="-1.1" y="-5" width="2.2" height="10" transform="rotate(0)"/><rect x="-1.1" y="-5" width="2.2" height="10" transform="rotate(45)"/><rect x="-1.1" y="-5" width="2.2" height="10" transform="rotate(90)"/><rect x="-1.1" y="-5" width="2.2" height="10" transform="rotate(135)"/></g><circle r="3.7" fill="#21428d"/><circle r="1.75" fill="#fff"/></g></svg>
<div class="r" style="left:370px;top:113.4px;width:101.7px;height:16px;background:#000;"></div>
<div class="r" style="left:370px;top:113.4px;width:62.8px;height:266.6px;background:#000;"></div>
<div class="r" style="left:435.7px;top:113.4px;width:36px;height:257.6px;background:#000;"></div>
<div class="r" style="left:474px;top:113.4px;width:269.5px;height:257.6px;background:#000;"></div>
<div class="r" style="left:370px;top:129.3px;width:62.8px;height:17.3px;background:linear-gradient(#f1f1f1,#dedede);"></div>
<div class="r" style="left:435.7px;top:129.3px;width:36px;height:17.3px;background:linear-gradient(#f1f1f1,#dedede);"></div>
<span class="t" style="left:379px;top:133.60px;font-size:8px;color:#111;font-weight:bold;-webkit-text-stroke:0;transform:scaleX(0.858);">Name</span>
<span class="t" style="left:444.5px;top:133.60px;font-size:8px;color:#111;font-weight:bold;-webkit-text-stroke:0;transform:scaleX(0.858);">Value</span>
<svg class="r" style="left:374.5px;top:149.9px;" width="5" height="7" viewBox="0 0 5 7"><path d="M1 1 L3.8 3.5 L1 6" fill="none" stroke="#bbb" stroke-width="0.9"/></svg>
<svg class="r" style="left:383.5px;top:149.9px;" width="8" height="7" viewBox="0 0 8 7"><path d="M0.5 0.6 H3.4 V1.8 H4.6 V0.6 H7.5 V3.2 L5.6 6.3 L4 3.6 L2.4 6.3 L0.5 3.2 Z" fill="#aab6d2"/><circle cx="3.2" cy="4.2" r="1.25" fill="#eea030"/></svg>
<span class="t" style="left:392.5px;top:149.00px;font-size:8px;color:#fff;">data_i[3:0]</span>
<span class="t" style="left:439.5px;top:149.00px;font-size:8px;color:#fff;">7</span>
<svg class="r" style="left:374.5px;top:163.52px;" width="5" height="7" viewBox="0 0 5 7"><path d="M1 1 L3.8 3.5 L1 6" fill="none" stroke="#bbb" stroke-width="0.9"/></svg>
<svg class="r" style="left:383.5px;top:163.52px;" width="8" height="7" viewBox="0 0 8 7"><path d="M0.5 0.6 H3.4 V1.8 H4.6 V0.6 H7.5 V3.2 L5.6 6.3 L4 3.6 L2.4 6.3 L0.5 3.2 Z" fill="#aab6d2"/><circle cx="3.2" cy="4.2" r="1.25" fill="#eea030"/></svg>
<span class="t" style="left:392.5px;top:162.62px;font-size:8px;color:#fff;">data_o[7:0]</span>
<span class="t" style="left:439.5px;top:162.62px;font-size:8px;color:#fff;">00</span>
<svg class="r" style="left:383.5px;top:176.64000000000001px;" width="7" height="8" viewBox="0 0 7 8"><path d="M1.2 0.5 V6.3 H3.3 V0.5" fill="none" stroke="#35a835" stroke-width="0.95"/><circle cx="4.5" cy="6" r="1.5" fill="#f0a030"/></svg>
<span class="t" style="left:392.5px;top:176.24px;font-size:8px;color:#fff;">ireq</span>
<span class="t" style="left:439.5px;top:176.24px;font-size:8px;color:#fff;">1</span>
<svg class="r" style="left:383.5px;top:190.26px;" width="7" height="8" viewBox="0 0 7 8"><path d="M1.2 0.5 V6.3 H3.3 V0.5" fill="none" stroke="#35a835" stroke-width="0.95"/><circle cx="4.5" cy="6" r="1.5" fill="#c8c8c8"/></svg>
<span class="t" style="left:392.5px;top:189.86px;font-size:8px;color:#fff;">oreq</span>
<span class="t" style="left:439.5px;top:189.86px;font-size:8px;color:#fff;">0</span>
<svg class="r" style="left:383.5px;top:203.88px;" width="7" height="8" viewBox="0 0 7 8"><path d="M1.2 0.5 V6.3 H3.3 V0.5" fill="none" stroke="#35a835" stroke-width="0.95"/><circle cx="4.5" cy="6" r="1.5" fill="#f0a030"/></svg>
<span class="t" style="left:392.5px;top:203.48px;font-size:8px;color:#fff;">clk</span>
<span class="t" style="left:439.5px;top:203.48px;font-size:8px;color:#fff;">1</span>
<svg class="r" style="left:383.5px;top:217.5px;" width="7" height="8" viewBox="0 0 7 8"><path d="M1.2 0.5 V6.3 H3.3 V0.5" fill="none" stroke="#35a835" stroke-width="0.95"/><circle cx="4.5" cy="6" r="1.5" fill="#f0a030"/></svg>
<span class="t" style="left:392.5px;top:217.10px;font-size:8px;color:#fff;">rstb</span>
<span class="t" style="left:439.5px;top:217.10px;font-size:8px;color:#fff;">1</span>
<svg class="r" style="left:374.5px;top:231.62px;" width="5" height="7" viewBox="0 0 5 7"><path d="M1 1 L3.8 3.5 L1 6" fill="none" stroke="#bbb" stroke-width="0.9"/></svg>
<svg class="r" style="left:383.5px;top:231.62px;" width="8" height="7" viewBox="0 0 8 7"><path d="M0.5 0.6 H3.4 V1.8 H4.6 V0.6 H7.5 V3.2 L5.6 6.3 L4 3.6 L2.4 6.3 L0.5 3.2 Z" fill="#aab6d2"/><circle cx="3.2" cy="4.2" r="1.25" fill="#d8d8d8"/></svg>
<span class="t" style="left:392.5px;top:230.72px;font-size:8px;color:#fff;">ireg[3:0]</span>
<span class="t" style="left:439.5px;top:230.72px;font-size:8px;color:#fff;">7</span>
<svg class="r" style="left:374.5px;top:245.24px;" width="5" height="7" viewBox="0 0 5 7"><path d="M1 1 L3.8 3.5 L1 6" fill="none" stroke="#bbb" stroke-width="0.9"/></svg>
<svg class="r" style="left:383.5px;top:245.24px;" width="8" height="7" viewBox="0 0 8 7"><path d="M0.5 0.6 H3.4 V1.8 H4.6 V0.6 H7.5 V3.2 L5.6 6.3 L4 3.6 L2.4 6.3 L0.5 3.2 Z" fill="#aab6d2"/><circle cx="3.2" cy="4.2" r="1.25" fill="#d8d8d8"/></svg>
<span class="t" style="left:392.5px;top:244.34px;font-size:8px;color:#fff;">mul_out[7:2</span>
<span class="t" style="left:439.5px;top:244.34px;font-size:8px;color:#fff;">0c</span>
<svg class="r" style="left:383.5px;top:258.36px;" width="7" height="8" viewBox="0 0 7 8"><path d="M1.2 0.5 V6.3 H3.3 V0.5" fill="none" stroke="#35a835" stroke-width="0.95"/><circle cx="4.5" cy="6" r="1.5" fill="#c8c8c8"/></svg>
<span class="t" style="left:392.5px;top:257.96px;font-size:8px;color:#fff;">req_ireg</span>
<span class="t" style="left:439.5px;top:257.96px;font-size:8px;color:#fff;">1</span>
<svg class="r" style="left:383.5px;top:271.98px;" width="7" height="8" viewBox="0 0 7 8"><path d="M1.2 0.5 V6.3 H3.3 V0.5" fill="none" stroke="#35a835" stroke-width="0.95"/><circle cx="4.5" cy="6" r="1.5" fill="#c8c8c8"/></svg>
<span class="t" style="left:392.5px;top:271.58px;font-size:8px;color:#fff;">req_d</span>
<span class="t" style="left:439.5px;top:271.58px;font-size:8px;color:#fff;">1</span>
<div class="r" style="left:370px;top:347px;width:62.8px;height:1.2px;background:#7a7a7a;"></div>
<div class="r" style="left:435.7px;top:347px;width:36px;height:1.2px;background:#7a7a7a;"></div>
<div class="r" style="left:476px;top:347px;width:267.5px;height:1.2px;background:#7a7a7a;"></div>
<svg class="r" style="left:474px;top:113px;font-family:'Liberation Mono',monospace" width="269.5" height="258" viewBox="0 -0.4 269.5 258"><path d="M8.8 30.8 V33.6" stroke="#bbb" stroke-width="0.8"/><path d="M20.7 30.8 V33.6" stroke="#bbb" stroke-width="0.8"/><path d="M32.6 30.8 V33.6" stroke="#bbb" stroke-width="0.8"/><path d="M44.6 30.8 V33.6" stroke="#bbb" stroke-width="0.8"/><path d="M56.5 30.8 V33.6" stroke="#bbb" stroke-width="0.8"/><path d="M68.4 30.8 V33.6" stroke="#bbb" stroke-width="0.8"/><path d="M80.4 30.8 V33.6" stroke="#bbb" stroke-width="0.8"/><path d="M92.3 30.8 V33.6" stroke="#bbb" stroke-width="0.8"/><path d="M104.2 30.8 V33.6" stroke="#bbb" stroke-width="0.8"/><path d="M116.2 30.8 V33.6" stroke="#bbb" stroke-width="0.8"/><path d="M128.1 30.8 V33.6" stroke="#bbb" stroke-width="0.8"/><path d="M140.0 30.8 V33.6" stroke="#bbb" stroke-width="0.8"/><path d="M152.0 30.8 V33.6" stroke="#bbb" stroke-width="0.8"/><path d="M163.9 30.8 V33.6" stroke="#bbb" stroke-width="0.8"/><path d="M175.8 30.8 V33.6" stroke="#bbb" stroke-width="0.8"/><path d="M187.8 30.8 V33.6" stroke="#bbb" stroke-width="0.8"/><path d="M199.7 30.8 V33.6" stroke="#bbb" stroke-width="0.8"/><path d="M211.6 30.8 V33.6" stroke="#bbb" stroke-width="0.8"/><path d="M223.6 30.8 V33.6" stroke="#bbb" stroke-width="0.8"/><path d="M235.5 30.8 V33.6" stroke="#bbb" stroke-width="0.8"/><path d="M247.4 30.8 V33.6" stroke="#bbb" stroke-width="0.8"/><path d="M259.4 30.8 V33.6" stroke="#bbb" stroke-width="0.8"/><path d="M2 33.5 H269.5" stroke="#999" stroke-width="0.8"/><path d="M2.0 36.0 H269.5 M2.0 46.2 H269.5 " fill="none" stroke="#12c812" stroke-width="0.9"/><text x="135.0" y="43.4" font-size="7" fill="#fff" text-anchor="middle" textLength="3.3" lengthAdjust="spacingAndGlyphs">7</text><path d="M2.0 49.6 H269.5 M2.0 59.8 H269.5 " fill="none" stroke="#12c812" stroke-width="0.9"/><text x="135.0" y="57.0" font-size="7" fill="#fff" text-anchor="middle" textLength="6.6" lengthAdjust="spacingAndGlyphs">00</text><rect x="2.0" y="63.3" width="267.5" height="10.2" fill="#08590a"/><path d="M2.0 63.3 H269.5 M2.0 73.5 H269.5" stroke="#12c812" stroke-width="0.9"/><path d="M2.0 87.1 H269.5" stroke="#12c812" stroke-width="0.9"/><rect x="2.0" y="90.6" width="267.5" height="10.2" fill="#08590a"/><path d="M2.0 90.6 H269.5 M2.0 100.8 H269.5" stroke="#12c812" stroke-width="0.9"/><rect x="2.0" y="104.2" width="267.5" height="10.2" fill="#08590a"/><path d="M2.0 104.2 H269.5 M2.0 114.5 H269.5" stroke="#12c812" stroke-width="0.9"/><path d="M2.0 117.9 H71.3 M2.0 128.1 H71.3 M76.3 117.9 H269.5 M76.3 128.1 H269.5 M71.3 117.9 L76.3 128.1 M71.3 128.1 L76.3 117.9 " fill="none" stroke="#12c812" stroke-width="0.9"/><text x="38.0" y="125.3" font-size="7" fill="#fff" text-anchor="middle" textLength="3.3" lengthAdjust="spacingAndGlyphs">0</text><text x="171.0" y="125.3" font-size="7" fill="#fff" text-anchor="middle" textLength="3.3" lengthAdjust="spacingAndGlyphs">7</text><path d="M2.0 131.5 H142.5 M2.0 141.7 H142.5 M147.5 131.5 H165.9 M147.5 141.7 H165.9 M170.6 131.5 H184.2 M170.6 141.7 H184.2 M189.2 131.5 H269.5 M189.2 141.7 H269.5 M142.5 131.5 L147.5 141.7 M142.5 141.7 L147.5 131.5 M165.9 131.5 L168.3 141.7 M165.9 141.7 L168.3 131.5 M168.2 131.5 L170.6 141.7 M168.2 141.7 L170.6 131.5 M184.2 131.5 L189.2 141.7 M184.2 141.7 L189.2 131.5 " fill="none" stroke="#12c812" stroke-width="0.9"/><text x="72.5" y="138.9" font-size="7" fill="#fff" text-anchor="middle" textLength="6.6" lengthAdjust="spacingAndGlyphs">00</text><text x="156.0" y="138.9" font-size="7" fill="#fff" text-anchor="middle" textLength="6.6" lengthAdjust="spacingAndGlyphs">04</text><text x="177.0" y="138.9" font-size="7" fill="#fff" text-anchor="middle" textLength="6.6" lengthAdjust="spacingAndGlyphs">0e</text><text x="227.0" y="138.9" font-size="7" fill="#fff" text-anchor="middle" textLength="6.6" lengthAdjust="spacingAndGlyphs">0c</text><path d="M2.0 155.4 H70.5" stroke="#12c812" stroke-width="0.9"/><rect x="70.5" y="145.2" width="199.0" height="10.2" fill="#08590a"/><path d="M70.5 145.2 H269.5 M70.5 155.4 H269.5" stroke="#12c812" stroke-width="0.9"/><path d="M70.5 145.2 V155.4" stroke="#12c812" stroke-width="0.9"/><path d="M2.0 169.1 H206.3" stroke="#12c812" stroke-width="0.9"/><rect x="206.3" y="158.8" width="63.2" height="10.2" fill="#08590a"/><path d="M206.3 158.8 H269.5 M206.3 169.0 H269.5" stroke="#12c812" stroke-width="0.9"/><path d="M206.3 158.8 V169.1" stroke="#12c812" stroke-width="0.9"/><path d="M56.5 24 V36.0 M56.5 46.2 V49.6 M56.5 59.8 V234" stroke="#a4a4a4" stroke-opacity="0.75" stroke-width="1"/><path d="M116.2 24 V36.0 M116.2 46.2 V49.6 M116.2 59.8 V234" stroke="#a4a4a4" stroke-opacity="0.75" stroke-width="1"/><path d="M175.8 24 V36.0 M175.8 46.2 V49.6 M175.8 59.8 V234" stroke="#a4a4a4" stroke-opacity="0.75" stroke-width="1"/><path d="M235.5 24 V36.0 M235.5 46.2 V49.6 M235.5 59.8 V234" stroke="#a4a4a4" stroke-opacity="0.75" stroke-width="1"/><path d="M186.0 21 V234" stroke="#1c58ad" stroke-width="1.2"/><text x="58.0"  y="27.6" font-size="7" fill="#eee" textLength="27.5" lengthAdjust="spacingAndGlyphs">285.5 ns</text><text x="117.7"  y="27.6" font-size="7" fill="#eee" textLength="27.5" lengthAdjust="spacingAndGlyphs">286.0 ns</text><text x="177.3"  y="27.6" font-size="7" fill="#eee" textLength="27.5" lengthAdjust="spacingAndGlyphs">286.5 ns</text><text x="237.0"  y="27.6" font-size="7" fill="#eee" textLength="27.5" lengthAdjust="spacingAndGlyphs">287.0 ns</text><rect x="206.3" y="0" width="38" height="9.3" fill="#f5f51a"/><text x="207.5" y="7.2" font-size="7.5" fill="#111" textLength="35" lengthAdjust="spacingAndGlyphs">286,754 ps</text><rect x="185.5" y="11.6" width="38" height="9.5" fill="#1e7bf0"/><text x="186.5" y="18.9" font-size="7.5" fill="#fff" textLength="35" lengthAdjust="spacingAndGlyphs">286,585 ps</text><path d="M206.3 9 V234" stroke="#d8d820" stroke-width="0.9"/></svg>
<div class="r" style="left:743.5px;top:113.4px;width:8.5px;height:266.6px;background:#f7f7f7;"></div>
<svg class="r" style="left:745px;top:116px;" width="7" height="6" viewBox="0 0 7 6"><path d="M1 4.5 L3.5 2 L6 4.5" fill="none" stroke="#4a4a4a" stroke-width="1.15"/></svg>
<svg class="r" style="left:745px;top:365.2px;" width="7" height="6" viewBox="0 0 7 6"><path d="M1 1.5 L3.5 4 L6 1.5" fill="none" stroke="#4a4a4a" stroke-width="1.15"/></svg>
<div class="r" style="left:432.8px;top:371px;width:319.2px;height:9px;background:#f7f7f7;"></div>
<svg class="r" style="left:437px;top:372.3px;" width="6" height="7" viewBox="0 0 6 7"><path d="M4.5 1 L2 3.5 L4.5 6" fill="none" stroke="#4a4a4a" stroke-width="1.15"/></svg>
<svg class="r" style="left:465px;top:372.3px;" width="6" height="7" viewBox="0 0 6 7"><path d="M1.5 1 L4 3.5 L1.5 6" fill="none" stroke="#4a4a4a" stroke-width="1.15"/></svg>
<svg class="r" style="left:476px;top:372.3px;" width="6" height="7" viewBox="0 0 6 7"><path d="M4.5 1 L2 3.5 L4.5 6" fill="none" stroke="#4a4a4a" stroke-width="1.15"/></svg>
<svg class="r" style="left:745.5px;top:372.5px;" width="6" height="7" viewBox="0 0 6 7"><path d="M1.5 1 L4 3.5 L1.5 6" fill="none" stroke="#4a4a4a" stroke-width="1.15"/></svg>
<div class="r" style="left:533px;top:373.2px;width:20px;height:4.5px;background:#c4c4c4;border-radius:2.5px"></div>
<div class="r" style="left:168.5px;top:389.5px;width:585.5px;height:115px;background:#fff;border:2px solid #e0e0e0"></div>
<div class="r" style="left:170.5px;top:391.5px;width:581.5px;height:16.5px;background:#ececec;"></div>
<div class="r" style="left:170.5px;top:391.5px;width:71.5px;height:16.5px;background:#fff;"></div>
<span class="t" style="left:174px;top:393.80px;font-size:8px;color:#111;font-weight:bold;-webkit-text-stroke:0;transform:scaleX(0.858);">Tcl Console</span>
<svg class="r" style="left:232.20000000000002px;top:397.4px;" width="5.2" height="5.2" viewBox="0 0 5.2 5.2"><path d="M0.5 0.5 L4.7 4.7 M4.7 0.5 L0.5 4.7" stroke="#777" stroke-width="0.8"/></svg>
<span class="t" style="left:245px;top:393.80px;font-size:8px;color:#999;font-weight:bold;-webkit-text-stroke:0;transform:scaleX(0.858);">Messages</span>
<div class="r" style="left:287px;top:392px;width:1px;height:14.5px;background:#d6d6d6;"></div>
<span class="t" style="left:291px;top:393.80px;font-size:8px;color:#999;font-weight:bold;-webkit-text-stroke:0;transform:scaleX(0.858);">Log</span>
<div class="r" style="left:311.5px;top:392px;width:1px;height:14.5px;background:#d6d6d6;"></div>
<span class="t" style="left:703.0px;top:394.60px;font-size:8.5px;color:#8a8a8a;transform:scaleX(1);font-family:'Liberation Sans',sans-serif;font-weight:bold;">?</span>
<div class="r" style="left:717.0px;top:401px;width:5px;height:1px;background:#8a8a8a;"></div>
<div class="r" style="left:729.0px;top:396.5px;width:5.5px;height:5.5px;background:transparent;border:1px solid #8a8a8a"></div>
<svg class="r" style="left:740.5px;top:396px;" width="6.5" height="6.5" viewBox="0 0 6.5 6.5"><path d="M3 0.8 H0.6 V5.9 H5.7 V3.5" fill="none" stroke="#8a8a8a" stroke-width="0.9"/><path d="M3.6 0.6 H6 V3 M6 0.6 L3.4 3.2" fill="none" stroke="#8a8a8a" stroke-width="0.9"/></svg>
<svg class="r" style="left:174.5px;top:412.5px;" width="10" height="10" viewBox="0 0 10 10"><circle cx="4.2" cy="4.2" r="2.9" fill="none" stroke="#21428d" stroke-width="1.1"/><path d="M6.4 6.4 L9 9" stroke="#21428d" stroke-width="1.3"/></svg>
<div class="r" style="left:190px;top:412.0px;width:1px;height:11px;background:#dcdcdc;"></div>
<svg class="r" style="left:197.5px;top:413.3px;" width="7" height="8.4" viewBox="0 0 7 8.4"><path d="M0.3 0.5 h6.4 M0.3 7.9 h6.4" stroke="#21428d" stroke-width="0.9"/><path d="M3.5 4 L5.7 1.9 H1.3 Z M3.5 4.4 L5.7 6.5 H1.3 Z" fill="#21428d"/></svg>
<div class="r" style="left:211.5px;top:412.0px;width:1px;height:11px;background:#dcdcdc;"></div>
<svg class="r" style="left:217.7px;top:413.0px;" width="8" height="9" viewBox="0 0 8 9"><path d="M4 0.3 L7.4 4.1 H0.6 Z M4 8.7 L7.4 4.9 H0.6 Z" fill="#21428d"/><path d="M0 2.9 h8 M0 6.1 h8" stroke="#fff" stroke-width="0.5"/></svg>
<div class="r" style="left:232px;top:412.0px;width:1px;height:11px;background:#dcdcdc;"></div>
<svg class="r" style="left:239px;top:413.5px;" width="7" height="8" viewBox="0 0 7 8"><rect x="1.2" y="0.5" width="1.5" height="7" fill="#21428d"/><rect x="4.3" y="0.5" width="1.5" height="7" fill="#21428d"/></svg>
<div class="r" style="left:253px;top:412.0px;width:1px;height:11px;background:#dcdcdc;"></div>
<svg class="r" style="left:259.5px;top:413.5px;" width="8" height="8" viewBox="0 0 8 8"><rect x="0.6" y="0.6" width="5" height="5.6" fill="none" stroke="#21428d" stroke-width="1"/><rect x="2.4" y="2.2" width="5" height="5.4" fill="#21428d"/></svg>
<div class="r" style="left:274px;top:412.0px;width:1px;height:11px;background:#dcdcdc;"></div>
<svg class="r" style="left:280px;top:413.5px;" width="9" height="8" viewBox="0 0 9 8"><rect x="0.5" y="0.5" width="8" height="7" fill="none" stroke="#21428d" stroke-width="1"/><path d="M4.5 0.5 V7.5 M0.5 2.8 H8.5 M0.5 5.2 H8.5" stroke="#21428d" stroke-width="0.8"/><rect x="4.5" y="2.8" width="4" height="2.4" fill="#21428d"/></svg>
<div class="r" style="left:295px;top:412.0px;width:1px;height:11px;background:#dcdcdc;"></div>
<svg class="r" style="left:301px;top:413.0px;" width="8" height="9" viewBox="0 0 8 9"><path d="M0.5 1.8 H7.5 M2.8 1.5 V0.5 H5.2 V1.5" stroke="#21428d" stroke-width="1" fill="none"/><path d="M1.3 2.8 H6.7 L6.2 8.5 H1.8 Z" fill="#21428d"/></svg>
<div class="r" style="left:170.5px;top:426.5px;width:581.5px;height:1px;background:#e0e0e0;"></div>
<svg class="r" style="left:174px;top:428px;" width="8" height="48" viewBox="0 0 8 48"><path d="M3.6 0 V47.5" stroke="#a8a8a8" stroke-width="0.9" stroke-dasharray="1.6 1.6"/><ellipse cx="3.6" cy="34.3" rx="3" ry="3.8" fill="#fff" stroke="#a8a8a8" stroke-width="0.8"/><path d="M2 34.3 H5.2" stroke="#888" stroke-width="0.8"/></svg>
<span class="t" style="left:185.2px;top:427.60px;font-size:8px;color:#222;"># run 1000ns</span>
<span class="t" style="left:185.2px;top:437.30px;font-size:8px;color:#222;">INFO: [USF-XSim-96] XSim completed. Design snapshot 'testmain_time_impl' loaded.</span>
<span class="t" style="left:185.2px;top:446.80px;font-size:8px;color:#222;">INFO: [USF-XSim-97] XSim simulation ran for 1000ns</span>
<span class="t" style="left:185.2px;top:456.60px;font-size:8px;color:#222;">launch_simulation: Time (s): cpu = 00:00:26 ; elapsed = 00:00:24 . Memory (MB): peak = 7396.062 ; gain = 898.480 ; free physical = 183 ; free virtual = 350</span>
<div class="r" style="left:738.5px;top:427.5px;width:9px;height:50px;background:#f7f7f7;"></div>
<svg class="r" style="left:738.5px;top:429px;" width="7" height="6" viewBox="0 0 7 6"><path d="M1 4.5 L3.5 2 L6 4.5" fill="none" stroke="#4a4a4a" stroke-width="1.15"/></svg>
<svg class="r" style="left:738.5px;top:470px;" width="7" height="6" viewBox="0 0 7 6"><path d="M1 1.5 L3.5 4 L6 1.5" fill="none" stroke="#4a4a4a" stroke-width="1.15"/></svg>
<div class="r" style="left:740px;top:447px;width:4.5px;height:20px;background:#bdbdbd;border-radius:2.5px"></div>
<div class="r" style="left:184px;top:477.5px;width:554px;height:8px;background:#f7f7f7;"></div>
<svg class="r" style="left:186.5px;top:478px;" width="6" height="7" viewBox="0 0 6 7"><path d="M4.5 1 L2 3.5 L4.5 6" fill="none" stroke="#4a4a4a" stroke-width="1.15"/></svg>
<svg class="r" style="left:731.5px;top:478px;" width="6" height="7" viewBox="0 0 6 7"><path d="M1.5 1 L4 3.5 L1.5 6" fill="none" stroke="#4a4a4a" stroke-width="1.15"/></svg>
<div class="r" style="left:195px;top:479.3px;width:221px;height:4.5px;background:#c8c8c8;border-radius:2.5px"></div>
<div class="r" style="left:172.5px;top:488.5px;width:577.5px;height:13px;background:#fff;border:1px solid #cfcfcf"></div>
<span class="t" style="left:176.5px;top:489.80px;font-size:8px;color:#999;">Type a Tcl command here</span>
<div class="r" style="left:8px;top:507.2px;width:752px;height:11.5px;background:#ececec;"></div>
<span class="t" style="left:696px;top:508.20px;font-size:8px;color:#222;">Sim Time: 1 us</span>
<div class="r" style="left:751.5px;top:509.5px;width:8.5px;height:9.2px;background:#fafafa;"></div>
<svg class="r" style="left:752px;top:510.5px;" width="7.5" height="7.5" viewBox="0 0 7.5 7.5"><path d="M7 1 L1 7 M7 3.2 L3.2 7 M7 5.4 L5.4 7" stroke="#c4c4c4" stroke-width="0.6"/></svg>
</body></html>
